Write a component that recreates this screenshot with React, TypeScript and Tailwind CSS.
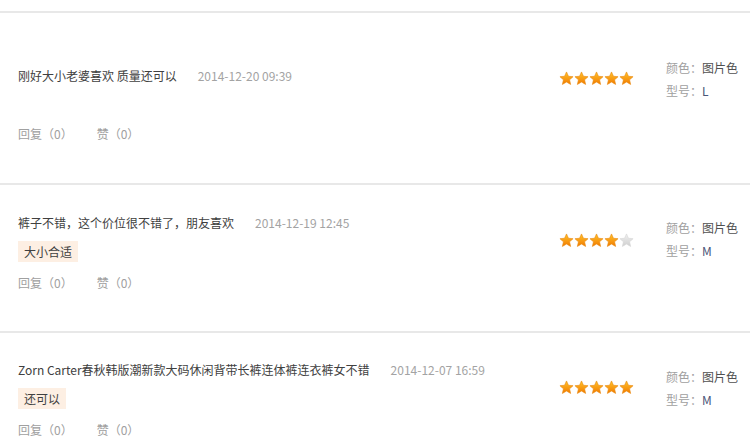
import React from "react";

const font = { fontFamily: '"Noto Sans CJK SC", "Noto Sans", sans-serif' };

function Star({ filled, id }: { filled: boolean; id: string }) {
  return (
    <svg width="15" height="15" viewBox="0 0 24 24" className="block">
      <defs>
        <linearGradient id={id} x1="0" y1="0" x2="0" y2="1">
          <stop offset="0" stopColor={filled ? "#ffc42a" : "#f0f0f0"} />
          <stop offset="1" stopColor={filled ? "#f27a00" : "#cfcfcf"} />
        </linearGradient>
      </defs>
      <path
        d="M12 1.5l3.1 6.9 7.4.7-5.6 5 1.7 7.4L12 17.6l-6.6 3.9 1.7-7.4-5.6-5 7.4-.7z"
        fill={`url(#${id})`}
        stroke={filled ? "#e88a10" : "#d6d6d6"}
        strokeWidth="1"
        strokeLinejoin="round"
      />
    </svg>
  );
}

function Stars({ n, k }: { n: number; k: string }) {
  return (
    <div className="flex">
      {[0, 1, 2, 3, 4].map((i) => (
        <Star key={i} filled={i < n} id={`g-${k}-${i}`} />
      ))}
    </div>
  );
}

type ItemProps = {
  text: string;
  date: string;
  tag?: string;
  stars: number;
  size: string;
  h: string;
  leftPt: string;
  starPt: string;
  specPt: string;
  replyMt: string;
  k: string;
  border?: boolean;
};

function Item(p: ItemProps) {
  return (
    <div className={`flex ${p.h} ${p.border ? "border-b-2 border-[#e8e8e8]" : ""}`}>
      <div className={`w-[559px] shrink-0 pl-[18px] ${p.leftPt}`}>
        <div className="flex h-[20px] items-center text-[12px] text-[#404040]">
          <span>{p.text}</span>
          <span className="ml-[21px] text-[#a3a3a3]">{p.date}</span>
        </div>
        {p.tag && (
          <div className="mt-[8px] flex">
            <span className="flex h-[21px] items-center bg-[#fdefe3] px-[6px] text-[12px] text-[#404040]">
              {p.tag}
            </span>
          </div>
        )}
        <div className={`flex h-[20px] items-center text-[12px] text-[#a0a0a0] ${p.replyMt}`}>
          <span>回复（0）</span>
          <span className="ml-[24px]">赞（0）</span>
        </div>
      </div>
      <div className={`w-[107px] shrink-0 ${p.starPt}`}>
        <Stars n={p.stars} k={p.k} />
      </div>
      <div className={`flex-1 text-[12px] ${p.specPt}`}>
        <div className="flex h-[23px] items-center">
          <span className="text-[#a0a0a0]">颜色：</span>
          <span className="text-[#505050]">图片色</span>
        </div>
        <div className="flex h-[23px] items-center">
          <span className="text-[#a0a0a0]">型号：</span>
          <span className="text-[#4a5578]">{p.size}</span>
        </div>
      </div>
    </div>
  );
}

export default function App() {
  return (
    <div className="h-[442px] w-[750px] overflow-hidden bg-white" style={font}>
      <div className="h-[13px] border-b-2 border-[#e8e8e8]" />
      <Item
        k="a"
        border
        h="h-[172px]"
        text="刚好大小老婆喜欢 质量还可以"
        date="2014-12-20 09:39"
        stars={5}
        size="L"
        leftPt="pt-[53px]"
        starPt="pt-[58px]"
        specPt="pt-[43px]"
        replyMt="mt-[38px]"
      />
      <Item
        k="b"
        border
        h="h-[148px]"
        text="裤子不错，这个价位很不错了，朋友喜欢"
        date="2014-12-19 12:45"
        tag="大小合适"
        stars={4}
        size="M"
        leftPt="pt-[28px]"
        starPt="pt-[48px]"
        specPt="pt-[31px]"
        replyMt="mt-[11px]"
      />
      <Item
        k="c"
        h="h-[120px]"
        text="Zorn Carter春秋韩版潮新款大码休闲背带长裤连体裤连衣裤女不错"
        date="2014-12-07 16:59"
        tag="还可以"
        stars={5}
        size="M"
        leftPt="pt-[27px]"
        starPt="pt-[47px]"
        specPt="pt-[32px]"
        replyMt="mt-[11px]"
      />
    </div>
  );
}
